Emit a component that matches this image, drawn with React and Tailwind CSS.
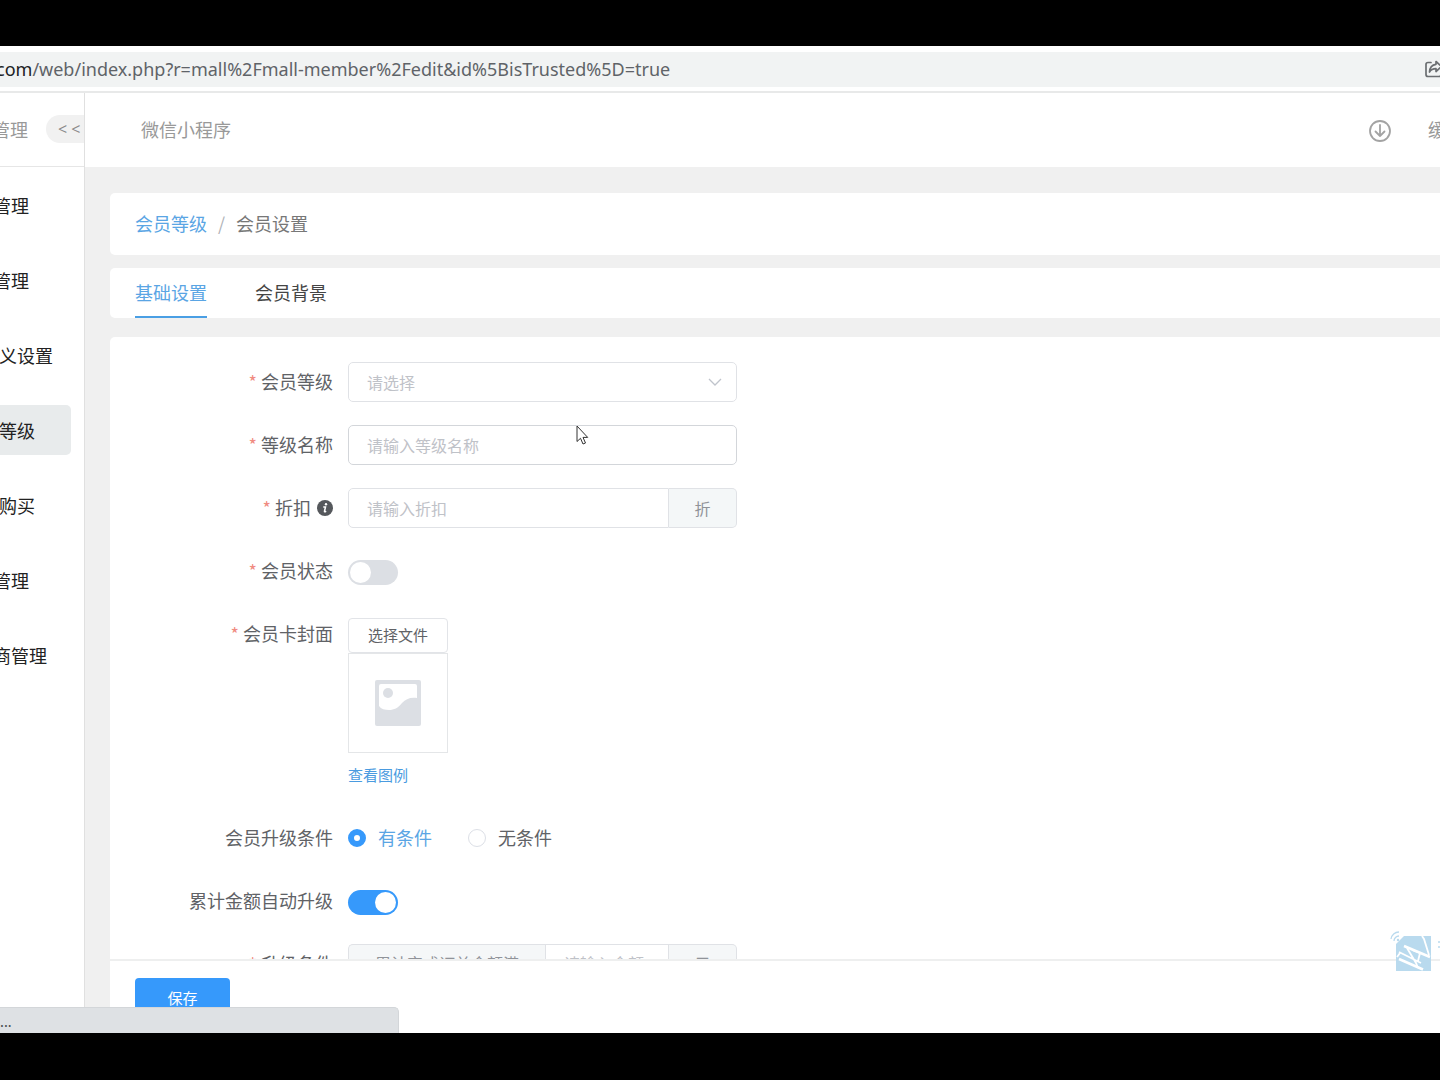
import React from "react";

const menu = [
  { text: "管理", cut: true },
  { text: "管理", cut: true },
  { text: "义设置" },
  { text: "等级", active: true },
  { text: "购买" },
  { text: "管理", cut: true },
  { text: "商管理", cut: true },
];

const fieldBox =
  "h-10 w-full rounded-[5px] border border-[#e0e2e6] bg-white px-[18px] text-base text-[#606266] outline-none placeholder:text-[#bfc2c8]";

function AddressBar() {
  return (
    <div className="shrink-0 border-b-2 border-[#e8e9e9] bg-white pt-[6px] pb-1">
      <div className="flex h-[35px] items-center justify-between overflow-hidden bg-[#f1f3f3] font-['Noto_Sans',sans-serif] text-lg">
        <span className="-ml-1 pb-[2px] whitespace-nowrap text-[#5f6368]">
          <span className="text-[#202124]">com</span>
          /web/index.php?r=mall%2Fmall-member%2Fedit&amp;id%5BisTrusted%5D=true
        </span>
        <button type="button" aria-label="分享" className="-mr-1 shrink-0 pb-[2px]">
          <svg viewBox="0 0 20 20" className="size-5" fill="none" stroke="#6b6e71" strokeWidth="1.7" strokeLinejoin="round" strokeLinecap="round">
            <path d="M7 3.5H4a2 2 0 0 0-2 2v10a2 2 0 0 0 2 2h11a2 2 0 0 0 2-2V14" />
            <path d="M12 2.5l5.5 5-5.5 5V9.7c-3 0-5 .8-6.500 3.300C5.800 8.500 8.500 5.700 12 5.300z" />
          </svg>
        </button>
      </div>
    </div>
  );
}

function Sidebar() {
  return (
    <aside className="w-[85px] shrink-0 overflow-hidden border-r border-[#e0e0e0] bg-white">
      <div className="flex h-[74px] items-center justify-between border-b border-[#e6e6e6] pb-[2px]">
        <span className="-ml-2 text-lg text-[#999]">管理</span>
        <button
          type="button"
          aria-label="收起菜单"
          className="flex h-7 w-[38px] items-center gap-1 rounded-l-[14px] bg-[#f1f1f1] pl-3 font-['Open_Sans',sans-serif] text-base text-[#8a8a8a]"
        >
          <span>&lt;</span>
          <span>&lt;</span>
        </button>
      </div>
      <nav className="flex flex-col gap-[25px] pt-[13px] pr-[13px]">
        {menu.map((item, index) => (
          <a
            key={index}
            href="#"
            className={`flex h-[50px] items-center rounded-r-[5px] text-lg whitespace-nowrap text-[#222] ${
              item.active ? "bg-[#e8ebec]" : ""
            }`}
          >
            <span className={item.cut ? "-ml-[7px]" : "-ml-px"}>{item.text}</span>
          </a>
        ))}
      </nav>
    </aside>
  );
}

function TopBar() {
  return (
    <header className="flex h-[74px] shrink-0 items-center justify-between overflow-hidden bg-white pl-14 text-lg text-[#999]">
      <span className="pb-[2px]">微信小程序</span>
      <div className="-mr-[6px] flex items-center gap-9">
        <button type="button" aria-label="下载" className="pt-[2px]">
          <svg viewBox="0 0 24 24" className="size-6" fill="none" stroke="#a3a3a3" strokeWidth="1.8" strokeLinecap="round" strokeLinejoin="round">
            <circle cx="12" cy="12" r="10" />
            <path d="M12 6v11M7.500 12.500L12 17l4.500-4.500" />
          </svg>
        </button>
        <span className="pb-[2px]">缓</span>
      </div>
    </header>
  );
}

// Label column plus whatever control the row holds
function FormRow({ label, htmlFor, required, icon, children }) {
  return (
    <div className="flex">
      <label
        htmlFor={htmlFor}
        className="flex h-10 w-[238px] shrink-0 items-center justify-end pr-[15px] pb-[2px] text-lg text-[#606266]"
      >
        {required && <span className="mr-1 text-[#f08a80]">*</span>}
        {label}
        {icon}
      </label>
      <div className="w-[389px]">{children}</div>
    </div>
  );
}

function Switch({ id, defaultChecked }) {
  return (
    <div className="flex h-[43px] items-center">
      <input
        id={id}
        type="checkbox"
        role="switch"
        defaultChecked={defaultChecked}
        className="h-[25px] w-[50px] appearance-none rounded-full bg-[#dcdfe4] p-[2px] before:block before:size-[21px] before:rounded-full before:bg-white checked:bg-[#3699fb] checked:before:ml-[25px]"
      />
    </div>
  );
}

function Radio({ id, label, defaultChecked }) {
  return (
    <label htmlFor={id} className="flex items-center gap-3 text-lg text-[#606266] has-checked:text-[#5aa5e4]">
      <input
        id={id}
        type="radio"
        name="upgrade"
        defaultChecked={defaultChecked}
        className="size-[18px] appearance-none rounded-full border border-[#dcdfe6] bg-white checked:border-[6px] checked:border-[#3699fb]"
      />
      <span className="pb-[2px]">{label}</span>
    </label>
  );
}

function InfoIcon() {
  return (
    <svg viewBox="0 0 16 16" className="mt-[2px] ml-[6px] size-4">
      <circle cx="8" cy="8" r="8" fill="#55585c" />
      <circle cx="9" cy="4.200" r="1.200" fill="#fff" />
      <path d="M6.800 7h1.700l-1 4.200q-.2 1 1.200.3" fill="none" stroke="#fff" strokeWidth="1.500" strokeLinecap="round" />
    </svg>
  );
}

function PictureIcon() {
  return (
    <svg viewBox="0 0 46 46" className="size-[46px]">
      <rect width="46" height="46" rx="2" fill="#dcdfe4" />
      <path d="M4 6q0-2 2-2h34q2 0 2 2v12c-7-1-11 1-15 5-4 5-8 7-13 7-4 0-8-1-10-4z" fill="#fff" />
      <circle cx="13" cy="13" r="5" fill="#dcdfe4" />
    </svg>
  );
}

function MemberForm() {
  return (
    <form className="flex flex-col gap-[23px] pt-[25px]">
      <FormRow label="会员等级" htmlFor="level" required>
        <div className="relative">
          <select id="level" defaultValue="" className={`${fieldBox} appearance-none text-[#bfc2c8]!`}>
            <option value="">请选择</option>
          </select>
          <svg viewBox="0 0 14 14" className="pointer-events-none absolute top-[13px] right-[15px] size-[14px]" fill="none" stroke="#c0c4cc" strokeWidth="1.300">
            <path d="M1 4l6 6 6-6" />
          </svg>
        </div>
      </FormRow>
      <FormRow label="等级名称" htmlFor="name" required>
        <input id="name" type="text" placeholder="请输入等级名称" className={`${fieldBox} border-[#d3d6da]!`} />
      </FormRow>
      <FormRow label="折扣" htmlFor="discount" required icon={<InfoIcon />}>
        <div className="flex">
          <input id="discount" type="text" placeholder="请输入折扣" className={`${fieldBox} flex-1 rounded-r-none`} />
          <span className="flex w-[68px] items-center justify-center rounded-r-[5px] border border-l-0 border-[#e0e2e6] bg-[#f4f7f8] text-base text-[#909399]">
            折
          </span>
        </div>
      </FormRow>
      <FormRow label="会员状态" htmlFor="status" required>
        <div className="h-10">
          <Switch id="status" />
        </div>
      </FormRow>
      <FormRow label="会员卡封面" htmlFor="cover" required>
        <div className="flex flex-col items-start pt-1">
          <button
            id="cover"
            type="button"
            className="h-[35px] w-[100px] rounded-[4px] border border-[#e2e4e8] bg-white text-[15px] text-[#606266]"
          >
            选择文件
          </button>
          <div className="flex size-[100px] items-center justify-center border border-[#e4e6e8]">
            <PictureIcon />
          </div>
          <a href="#" className="mt-3 h-[30px] text-[15px] leading-5 text-[#4a9be0]">
            查看图例
          </a>
        </div>
      </FormRow>
      <FormRow label="会员升级条件">
        <div className="flex h-10 items-center gap-9">
          <Radio id="has" label="有条件" defaultChecked />
          <Radio id="none" label="无条件" />
        </div>
      </FormRow>
      <FormRow label="累计金额自动升级" htmlFor="auto">
        <div className="h-10">
          <Switch id="auto" defaultChecked />
        </div>
      </FormRow>
      <FormRow label="升级条件" htmlFor="amount" required>
        <div className="flex">
          <span className="flex w-[197px] shrink-0 items-center justify-center rounded-l-[5px] border border-r-0 border-[#e0e2e6] bg-[#f5f7f8] pb-[3px] text-base text-[#909399]">
            累计完成订单金额满
          </span>
          <input id="amount" type="text" placeholder="请输入金额" className={`${fieldBox} min-w-0 flex-1 rounded-none pb-[3px]`} />
          <span className="flex w-[68px] shrink-0 items-center justify-center rounded-r-[5px] border border-l-0 border-[#e0e2e6] bg-[#f5f7f8] pb-[3px] text-base text-[#909399]">
            元
          </span>
        </div>
      </FormRow>
    </form>
  );
}

function Watermark() {
  return (
    <svg viewBox="0 0 50 42" className="absolute right-0 bottom-[61px] h-[42px] w-[50px]">
      <path d="M6 14L14 6h27v35H6z" fill="#b9daee" />
      <path d="M14 16l26 11M9 29l24 10.500" fill="none" stroke="#fff" strokeWidth="2.600" />
      <path d="M9 22l22 11M32 6l2 3 5 16M17 18l9 15 2 5M22 20l8 3-2 8M10 23l-3 4" fill="none" stroke="#fff" strokeWidth="1.800" />
      <path d="M1 9a8 8 0 0 1 8-7M4 11a5 5 0 0 1 5-5" fill="none" stroke="#b9daee" strokeWidth="1.300" />
      <circle cx="8" cy="10" r="1.200" fill="#b9daee" />
      <path d="M48 12h2M48 17h2" stroke="#b9daee" strokeWidth="1.300" />
    </svg>
  );
}

function Cursor() {
  return (
    <svg viewBox="0 0 13 20" className="pointer-events-none absolute top-[332px] left-[576px] h-5 w-[13px]">
      <path d="M1 1v15.500l3.500-3.200 2.500 5.700 2.500-1-2.500-5.600h4.700z" fill="#fff" stroke="#333" />
    </svg>
  );
}

export default function App() {
  return (
    <div className="flex h-screen flex-col overflow-hidden bg-black pt-[46px] pb-[47px] font-['Noto_Sans_CJK_SC',sans-serif]">
      <AddressBar />
      <div className="relative flex min-h-0 flex-1 overflow-hidden bg-white">
        <Sidebar />
        <div className="flex min-w-0 flex-1 flex-col bg-[#f0f0f0]">
          <TopBar />
          <main className="flex min-h-0 flex-1 flex-col pt-[26px] pl-[25px]">
            <div className="flex h-[62px] shrink-0 items-center rounded-l-[5px] bg-white pb-[2px] pl-[25px] text-lg">
              <a href="#" className="text-[#5aa5e4]">会员等级</a>
              <span className="mx-[11px] text-[#b0b3b8]">/</span>
              <span className="text-[#777]">会员设置</span>
            </div>
            <div role="tablist" className="mt-[13px] flex h-[50px] shrink-0 gap-12 rounded-l-[5px] bg-white pl-[25px] text-lg">
              <button type="button" role="tab" aria-selected="true" className="border-b-2 border-[#4a9fe4] text-[#5aa5e4]">
                基础设置
              </button>
              <button type="button" role="tab" aria-selected="false" className="border-b-2 border-transparent text-[#444]">
                会员背景
              </button>
            </div>
            <div className="mt-[19px] min-h-0 flex-1 overflow-hidden rounded-tl-[5px] bg-white">
              <MemberForm />
            </div>
            <div className="h-[74px] shrink-0 border-t-2 border-[#eeefef] bg-white pt-[17px] pl-[25px]">
              <button type="button" className="h-10 w-[95px] rounded-[4px] bg-[#3699fb] text-[15px] text-white">
                保存
              </button>
            </div>
          </main>
        </div>
        <Watermark />
        <Cursor />
        <div className="absolute bottom-0 left-0 flex h-[26px] w-[399px] items-center rounded-tr-[5px] border border-b-0 border-l-0 border-[#d3d6d9] bg-[#dee1e4] text-sm text-[#4a4d50]">
          <span>...</span>
        </div>
      </div>
    </div>
  );
}
